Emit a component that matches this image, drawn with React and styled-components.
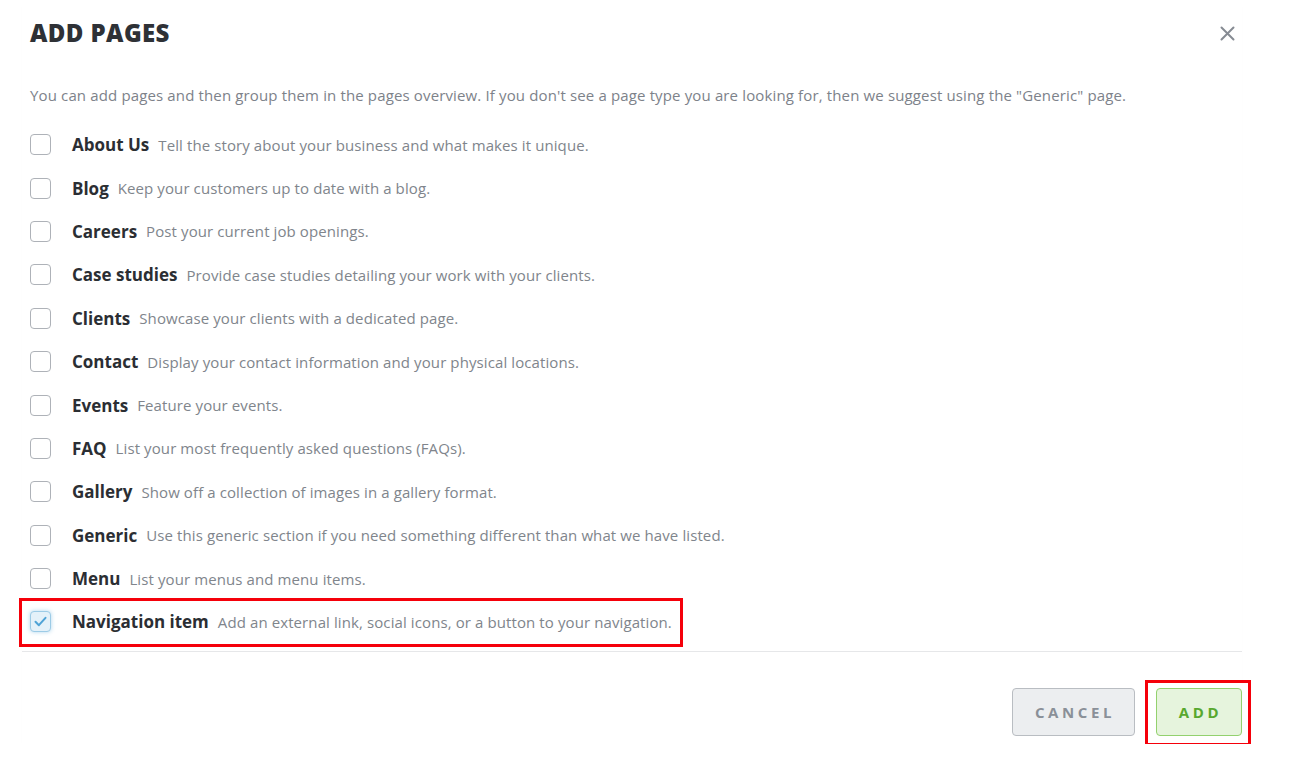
import React, { useState } from "react";
import styled, { createGlobalStyle } from "styled-components";

const GlobalStyle = createGlobalStyle`
  body {
    margin: 0;
    background: #fff;
    font-family: "Open Sans", "Liberation Sans", sans-serif;
  }
`;

const Modal = styled.div`
  width: 1212px;
  margin-left: 22px;
  padding: 0 0 8px 8px;
  background: #fff;
  box-shadow: 0 3px 4px -2px rgba(0, 0, 0, 0.04);
`;

const Header = styled.div`
  display: flex;
  align-items: center;
  justify-content: space-between;
  height: 64px;
  padding-right: 5px;
`;

const Title = styled.h1`
  margin: 0;
  font-size: 24px;
  font-weight: 800;
  color: #2e3136;
  letter-spacing: 0.4px;
`;

const CloseButton = styled.button`
  border: none;
  background: none;
  padding: 0;
  margin-top: 2px;
  width: 20px;
  height: 20px;
  display: flex;
  align-items: center;
  justify-content: center;
  cursor: pointer;
`;

const Intro = styled.p`
  margin: 19px 0 16px;
  font-size: 15px;
  line-height: 24px;
  color: #7d828a;
  letter-spacing: 0.14px;
`;

const List = styled.div`
  display: flex;
  flex-direction: column;
`;

const Row = styled.label`
  position: relative;
  display: flex;
  align-items: center;
  height: 43.4px;
  cursor: pointer;

  ${(p) =>
    p.$highlight &&
    `
    &::after {
      content: "";
      position: absolute;
      left: -11px;
      top: -2px;
      width: 664px;
      height: 49px;
      box-sizing: border-box;
      border: 3px solid #f5000a;
      pointer-events: none;
    }
  `}
`;

const Box = styled.span`
  width: 21px;
  height: 21px;
  box-sizing: border-box;
  border-radius: 4px;
  border: 1.5px solid ${(p) => (p.$checked ? "#9ccbe6" : "#aeb2b8")};
  background: ${(p) => (p.$checked ? "#e4f1f9" : "#fff")};
  box-shadow: ${(p) => (p.$checked ? "0 0 4px rgba(79,163,214,0.45)" : "none")};
  display: flex;
  align-items: center;
  justify-content: center;
  margin-right: 21px;
  flex-shrink: 0;
`;

const Name = styled.span`
  font-size: 17px;
  font-weight: 700;
  color: #2b2e33;
  margin-right: 9px;
`;

const Desc = styled.span`
  font-size: 15px;
  color: #80858c;
  letter-spacing: 0.1px;
`;

const Divider = styled.div`
  height: 1px;
  background: #e6e7e9;
  margin: 7px 0 0 -8px;
`;

const Footer = styled.div`
  display: flex;
  justify-content: flex-end;
  align-items: center;
  gap: 21px;
  padding-top: 36px;
`;

const Button = styled.button`
  position: relative;
  height: 48px;
  padding: 0;
  width: ${(p) => p.$w}px;
  border-radius: 4px;
  font-family: "Open Sans", "Liberation Sans", sans-serif;
  font-size: 15px;
  font-weight: 700;
  letter-spacing: 3.6px;
  text-indent: 3px;
  cursor: pointer;
  border: 1.5px solid ${(p) => (p.$primary ? "#93d16e" : "#b9bdc2")};
  background: ${(p) => (p.$primary ? "#e6f4dd" : "#eceef0")};
  color: ${(p) => (p.$primary ? "#58a82f" : "#8a9098")};

  ${(p) =>
    p.$highlight &&
    `
    &::after {
      content: "";
      position: absolute;
      left: -12px;
      top: -9px;
      right: -10px;
      bottom: -11px;
      border: 3px solid #f5000a;
      pointer-events: none;
    }
  `}
`;

const pages = [
  ["About Us", "Tell the story about your business and what makes it unique."],
  ["Blog", "Keep your customers up to date with a blog."],
  ["Careers", "Post your current job openings."],
  ["Case studies", "Provide case studies detailing your work with your clients."],
  ["Clients", "Showcase your clients with a dedicated page."],
  ["Contact", "Display your contact information and your physical locations."],
  ["Events", "Feature your events."],
  ["FAQ", "List your most frequently asked questions (FAQs)."],
  ["Gallery", "Show off a collection of images in a gallery format."],
  ["Generic", "Use this generic section if you need something different than what we have listed."],
  ["Menu", "List your menus and menu items."],
  ["Navigation item", "Add an external link, social icons, or a button to your navigation."],
];

function App() {
  const [checked, setChecked] = useState({ "Navigation item": true });

  return (
    <>
      <GlobalStyle />
      <Modal>
        <Header>
          <Title>ADD PAGES</Title>
          <CloseButton aria-label="Close">
            <svg width="15" height="15" viewBox="0 0 15 15">
              <path d="M1.5 1.5l12 12M13.5 1.5l-12 12" stroke="#868b93" strokeWidth="2" strokeLinecap="round" />
            </svg>
          </CloseButton>
        </Header>
        <Intro>
          You can add pages and then group them in the pages overview. If you don't see a page type you are
          looking for, then we suggest using the "Generic" page.
        </Intro>
        <List>
          {pages.map(([name, desc]) => {
            const on = !!checked[name];
            return (
              <Row
                key={name}
                $highlight={name === "Navigation item"}
                onClick={() => setChecked({ ...checked, [name]: !on })}
              >
                <Box $checked={on}>
                  {on && (
                    <svg width="13" height="11" viewBox="0 0 13 11">
                      <path d="M1.5 5.8l3.4 3.4L11.5 1.8" fill="none" stroke="#4fa3d6" strokeWidth="2" strokeLinecap="round" strokeLinejoin="round" />
                    </svg>
                  )}
                </Box>
                <Name>{name}</Name>
                <Desc>{desc}</Desc>
              </Row>
            );
          })}
        </List>
        <Divider />
        <Footer>
          <Button $w={123}>CANCEL</Button>
          <Button $w={86} $primary $highlight>
            ADD
          </Button>
        </Footer>
      </Modal>
    </>
  );
}

export default App;
